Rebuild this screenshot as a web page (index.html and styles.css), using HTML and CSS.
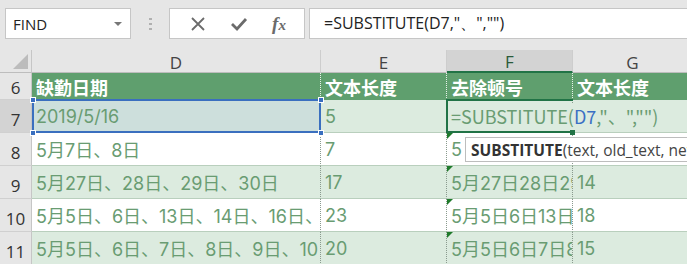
FILE: index.html
```html
<!DOCTYPE html>
<html>
<head>
<meta charset="utf-8">
<link rel="stylesheet" href="styles.css">
</head>
<body>
<div class="app">
  <div class="toolbar">
    <div class="namebox"><span class="nb-text">FIND</span><span class="caret"></span></div>
    <div class="grip"><i></i><i></i><i></i></div>
    <div class="fxbox">
      <svg class="ico" width="16" height="16" viewBox="0 0 16 16"><path d="M2 2 L14 14 M14 2 L2 14" stroke="#6b6b6b" stroke-width="1.8" fill="none"/></svg>
      <svg class="ico" width="18" height="16" viewBox="0 0 18 16"><path d="M2 8 L7 13 L16 3" stroke="#6b6b6b" stroke-width="2.8" fill="none"/></svg>
      <span class="fx">f<span class="fx-x">x</span></span>
    </div>
    <div class="formula">=SUBSTITUTE(D7,"、","")</div>
  </div>
  <div class="sheet">
    <div class="corner"><span class="tri"></span></div>
    <div class="colh">D</div>
    <div class="colh">E</div>
    <div class="colh colh-sel">F</div>
    <div class="colh">G</div>

    <div class="rowh r6">6</div>
    <div class="c hd r6 dot">缺勤日期</div>
    <div class="c hd r6 dot">文本长度</div>
    <div class="c hd r6 dot">去除顿号</div>
    <div class="c hd r6">文本长度</div>

    <div class="rowh rowh-sel">7</div>
    <div class="c band dsel dot">2019/5/16<i class="h tl"></i><i class="h tr"></i><i class="h bl"></i><i class="h br"></i></div>
    <div class="c band dot">5</div>
    <div class="c band edit dot"><span class="ftxt">=SUBSTITUTE(<span class="ref">D7</span>,"、","")</span><i class="eh"></i></div>
    <div class="c band"></div>

    <div class="rowh">8</div>
    <div class="c dot">5月7日、8日</div>
    <div class="c dot">7</div>
    <div class="c dot err">5</div>
    <div class="c"></div>

    <div class="rowh">9</div>
    <div class="c band dot">5月27日、28日、29日、30日</div>
    <div class="c band dot">17</div>
    <div class="c band dot err">5月27日28日29日30日</div>
    <div class="c band">14</div>

    <div class="rowh">10</div>
    <div class="c dot">5月5日、6日、13日、14日、16日、</div>
    <div class="c dot">23</div>
    <div class="c dot err">5月5日6日13日14日</div>
    <div class="c">18</div>

    <div class="rowh">11</div>
    <div class="c band dot">5月5日、6日、7日、8日、9日、10日</div>
    <div class="c band dot">20</div>
    <div class="c band dot err">5月5日6日7日8日</div>
    <div class="c band">15</div>

    <div class="tip"><b>SUBSTITUTE</b>(text, old_text, new_text, [instance_num])</div>
  </div>
</div>
</body>
</html>
```

FILE: styles.css
```css
* { box-sizing: border-box; }
html, body { margin: 0; padding: 0; }
body { width: 687px; height: 264px; overflow: hidden; background: #e6e6e6; }
.app { width: 687px; height: 264px; overflow: hidden; }

.toolbar {
  height: 50px;
  background: #e6e6e6;
  display: flex;
  align-items: flex-start;
  padding: 8px 0 0 5px;
  font-family: "Open Sans", "Noto Sans", sans-serif;
  color: #222;
}
.namebox {
  width: 126px; height: 31px;
  background: #fff; border: 1px solid #c6c6c6;
  display: flex; align-items: center; justify-content: space-between;
  padding: 0 8px 0 7px;
  font-size: 15px;
}
.caret {
  width: 0; height: 0;
  border-left: 4px solid transparent; border-right: 4px solid transparent;
  border-top: 4px solid #777;
}
.grip {
  width: 38px; height: 31px;
  display: flex; flex-direction: column; align-items: center; justify-content: center; gap: 3px;
}
.grip i { display: block; width: 3px; height: 2px; background: #b0b0b0; }
.fxbox {
  width: 136px; height: 31px;
  background: #fff; border: 1px solid #c6c6c6;
  display: flex; align-items: center; justify-content: space-around;
  padding: 0 6px 0 8px;
}
.ico { display: block; }
.fx {
  font-family: "Liberation Serif", serif; font-style: italic; font-size: 19px; color: #6b6b6b;
  line-height: 1; font-weight: bold;
}
.fx-x { font-size: 15px; }
.formula {
  flex: 1; height: 31px; margin-left: 4px;
  background: #fff; border: 1px solid #c6c6c6; border-right: none;
  display: flex; align-items: center; padding-left: 14px;
  font-size: 16px;
}

.sheet {
  position: relative;
  display: grid;
  grid-template-columns: 32px 289px 126px 126px 120px;
  grid-template-rows: 23px 27px 33px 33px 33px 33px 33px;
  background: #fff;
  font-family: "Noto Sans CJK SC", sans-serif;
}
.corner {
  background: #e6e6e6; border-right: 1px solid #c6c6c6; border-bottom: 1px solid #bdbdbd;
  position: relative;
}
.tri {
  position: absolute; right: 3px; bottom: 3px; width: 0; height: 0;
  border-left: 15px solid transparent; border-bottom: 15px solid #bcbcbc;
}
.colh {
  background: #e6e6e6; border-right: 1px solid #cdcdcd; border-bottom: 1px solid #bdbdbd;
  display: flex; align-items: center; justify-content: center;
  font-family: "Open Sans", sans-serif; font-size: 17px; color: #444; padding-top: 2px;
}
.colh-sel { background: #d3d3d3; border-bottom: 2px solid #217346; color: #2a5a3a; }
.rowh {
  background: #e6e6e6; border-right: 1px solid #c6c6c6; border-bottom: 1px solid #d0d0d0;
  display: flex; align-items: flex-end; justify-content: center;
  font-family: "Open Sans", sans-serif; font-size: 17px; color: #333; line-height: 1; padding-bottom: 4px;
}
.rowh.r6 { padding-bottom: 3px; }
.rowh-sel { background: #d3d3d3; }

.c {
  position: relative;
  border-bottom: 1px solid #b9cfbd;
  display: flex; align-items: center;
  padding-left: 4px;
  font-family: "Inter", "Noto Sans CJK SC", sans-serif;
  font-size: 18px; color: #699c72;
  white-space: nowrap; overflow: hidden;
}
.band { background: #dcebdf; }
.dot { border-right: 1px dotted #8a9a8e; }
.hd {
  background: #5f9f6e; color: #fff; font-weight: bold; font-size: 18px; border-bottom: none;
  font-family: "Noto Sans CJK SC", sans-serif;
}
.hd.dot { border-right: 1px dotted #e8f2ea; }

.dsel { background: #cddfdc; overflow: visible; }
.dsel::after {
  content: ""; position: absolute; left: 0; top: -1px; right: -1px; bottom: -1px;
  border: 2px solid #3a6fbf; pointer-events: none;
}
.h { position: absolute; width: 6px; height: 6px; background: #3a6fbf; border: 1px solid #fff; z-index: 3; }
.h.tl { left: -2px; top: -3px; }
.h.tr { right: -4px; top: -3px; }
.h.bl { left: -2px; bottom: -4px; }
.h.br { right: -4px; bottom: -4px; }

.edit { overflow: visible; z-index: 2; font-size: 18px; font-family: "Noto Sans CJK SC", sans-serif; }
.edit::after {
  content: ""; position: absolute; left: -1px; top: -1px; right: -1px; bottom: -1px;
  border: 2px solid #217346; border-right: none; pointer-events: none;
}
.ftxt { position: relative; z-index: 2; background: #dcebdf; }
.ref { color: #3a6fc4; }
.eh { position: absolute; right: -3px; bottom: -3px; width: 5px; height: 5px; background: #217346; z-index: 3; }

.err::before {
  content: ""; position: absolute; left: 0; top: 0; width: 0; height: 0;
  border-top: 6px solid #1f7a2b; border-right: 6px solid transparent;
}

.tip {
  position: absolute; left: 465px; top: 87px;
  height: 25px; width: 300px;
  background: #fff; border: 1px solid #bdbdbd;
  font-family: "Open Sans", sans-serif; font-size: 15.5px; color: #444;
  display: flex; align-items: center; padding-left: 5px; white-space: nowrap;
  z-index: 5;
}
.tip b { color: #333; }
```
